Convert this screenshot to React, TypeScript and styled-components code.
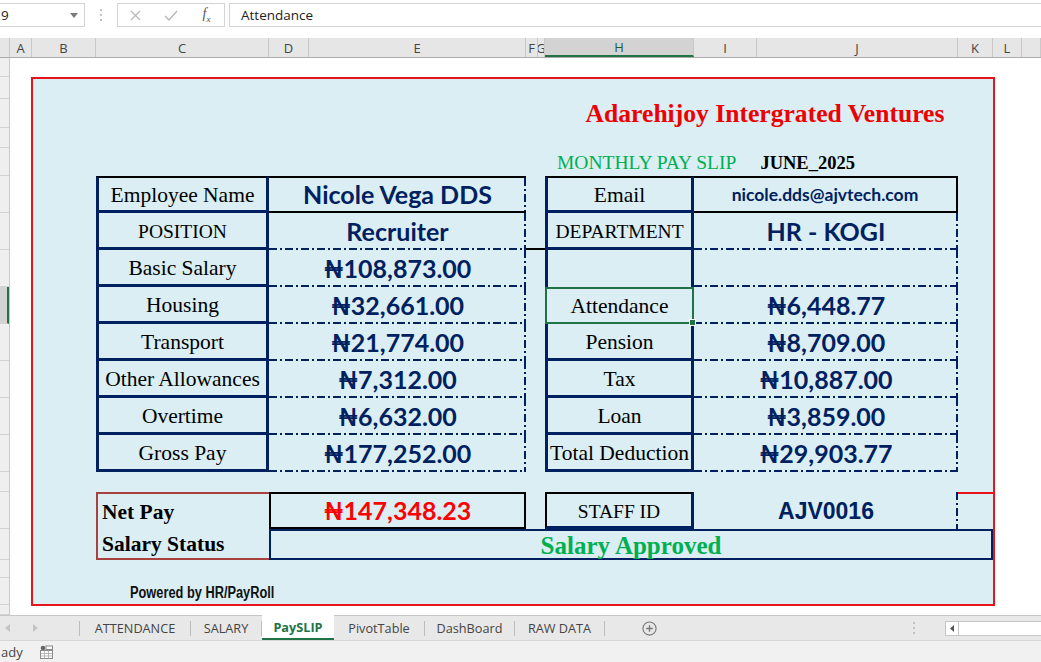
import React from 'react';
import styled, { createGlobalStyle } from 'styled-components';

const NAVY = '#002060';
const EXCEL_GREEN = '#217346';
const UI_FONT = '"Open Sans", "Noto Sans", sans-serif';
const SERIF = '"Liberation Serif", "DejaVu Serif", serif';
const FIGURES = 'Lato, "Noto Sans", "DejaVu Sans", sans-serif';

const GlobalStyle = createGlobalStyle`
  html, body {
    margin: 0;
    padding: 0;
    background: #fff;
  }
  body {
    font-family: ${UI_FONT};
    color: #444;
    overflow: hidden;
  }
`;

const Window = styled.div`
  width: 1041px;
  height: 662px;
  display: flex;
  flex-direction: column;
  overflow: hidden;
`;

/* ---------- formula bar ---------- */

const FormulaBar = styled.div`
  display: flex;
  align-items: flex-start;
  height: 38px;
  box-sizing: border-box;
  padding-top: 3px;
`;

const NameBox = styled.div`
  display: flex;
  align-items: center;
  justify-content: space-between;
  width: 85px;
  height: 24px;
  box-sizing: border-box;
  border: 1px solid #d4d4d4;
  border-left: none;
  padding: 0 6px 0 1px;
  font-size: 13.5px;
  color: #222;
`;

const Grip = styled.div<{ $w?: number }>`
  display: flex;
  flex-direction: column;
  align-items: center;
  justify-content: center;
  gap: 3px;
  width: ${(p) => p.$w ?? 32}px;
  height: 24px;
`;

const GripDot = styled.span`
  width: 2px;
  height: 2px;
  background: #c2c2c2;
`;

const FxBox = styled.div`
  display: grid;
  grid-template-columns: 35px 36px 35px;
  align-items: center;
  justify-items: center;
  height: 24px;
  box-sizing: border-box;
  border: 1px solid #d4d4d4;
`;

const FxGlyph = styled.span`
  font-family: ${SERIF};
  font-style: italic;
  font-size: 14px;
  color: #555;
  sub {
    font-size: 9px;
  }
`;

const FormulaInput = styled.div`
  flex: 1;
  display: flex;
  align-items: center;
  margin-left: 4px;
  height: 24px;
  box-sizing: border-box;
  border: 1px solid #d4d4d4;
  border-right: none;
  padding-left: 11px;
  font-size: 13.5px;
  color: #222;
`;

/* ---------- column headers ---------- */

const ColumnBar = styled.div`
  display: flex;
  height: 20px;
  box-sizing: border-box;
  background: #e6e6e6;
  border-bottom: 1px solid #ababab;
`;

const ColumnHead = styled.div<{ $w?: number; $active?: boolean }>`
  flex: ${(p) => (p.$w ? `0 0 ${p.$w}px` : '1')};
  display: flex;
  align-items: center;
  justify-content: center;
  overflow: hidden;
  box-sizing: border-box;
  border-right: 1px solid #c9c9c9;
  font-size: 13px;
  color: ${(p) => (p.$active ? '#1d5e39' : '#444')};
  background: ${(p) => (p.$active ? '#d3d3d3' : 'transparent')};
  border-bottom: ${(p) => (p.$active ? `2px solid ${EXCEL_GREEN}` : 'none')};
`;

/* ---------- sheet ---------- */

const Sheet = styled.div`
  flex: 1;
  min-height: 0;
  display: flex;
  background: #fff;
`;

const RowHeads = styled.div`
  flex: 0 0 10px;
  display: flex;
  flex-direction: column;
  box-sizing: border-box;
  background: #efefef;
  border-right: 1px solid #c9c9c9;
`;

const RowHead = styled.div<{ $h: number; $active?: boolean }>`
  flex: 0 0 ${(p) => p.$h}px;
  box-sizing: border-box;
  border-bottom: 1px solid #d3d3d3;
  background: ${(p) => (p.$active ? '#d3d3d3' : 'transparent')};
  border-right: ${(p) => (p.$active ? `2px solid ${EXCEL_GREEN}` : 'none')};
`;

const SheetBody = styled.div`
  flex: 1;
`;

const Card = styled.div`
  display: flex;
  flex-direction: column;
  width: 964px;
  height: 529px;
  box-sizing: border-box;
  margin: 19px 0 0 21px;
  padding-left: 63px;
  border: 2px solid #e8141b;
  background: #daeef3;
`;

const TitleRow = styled.div`
  display: flex;
  justify-content: center;
  align-items: flex-start;
  height: 58px;
  width: 448px;
  box-sizing: border-box;
  margin-left: 449px;
  padding: 22px 8px 0 0;
`;

const Title = styled.div`
  font-family: ${SERIF};
  font-weight: 700;
  font-size: 25.6px;
  line-height: 1;
  color: #ee0000;
  white-space: nowrap;
`;

const SubRow = styled.div`
  display: flex;
  align-items: baseline;
  height: 39px;
  box-sizing: border-box;
  padding: 16px 0 0 461px;
  line-height: 1;
  white-space: nowrap;
`;

const SlipName = styled.span`
  font-family: ${SERIF};
  font-size: 19.5px;
  color: #00b050;
`;

const Period = styled.span`
  margin-left: 24px;
  font-family: ${SERIF};
  font-weight: 700;
  font-size: 18.5px;
  color: #000;
`;

const Table = styled.div`
  display: grid;
  grid-template-columns: 173px 257px 19px 149px 264px;
  grid-template-rows: repeat(8, 37px);
`;

const Summary = styled.div`
  display: grid;
  grid-template-columns: 173px 257px 19px 149px 264px 35px;
  grid-template-rows: 37px 31px;
  margin-top: 20px;
`;

type Edge = 'thick' | 'black' | 'navy' | 'dash' | 'brown' | 'red' | 'green';

const line = (e?: Edge) => {
  switch (e) {
    case 'thick':
      return `3px solid ${NAVY}`;
    case 'black':
      return '2px solid #000';
    case 'navy':
      return `2px solid ${NAVY}`;
    case 'brown':
      return '2px solid #a8423d';
    case 'red':
      return '2px solid #e8141b';
    case 'green':
      return `2px solid ${EXCEL_GREEN}`;
    default:
      return 'none';
  }
};

const dashPattern = (dir: string) =>
  `linear-gradient(${dir}, ${NAVY} 0 8px, transparent 8px 11px, ${NAVY} 11px 13px, transparent 13px 16px)`;

// excel's dash-dot borders, drawn as repeating gradients on the right / bottom edge
const dashes = (b?: Edge, r?: Edge) => {
  const img: string[] = [];
  const pos: string[] = [];
  const size: string[] = [];
  const rep: string[] = [];
  if (b === 'dash') {
    img.push(dashPattern('90deg'));
    pos.push('left bottom');
    size.push('16px 2px');
    rep.push('repeat-x');
  }
  if (r === 'dash') {
    img.push(dashPattern('180deg'));
    pos.push('right top');
    size.push('2px 16px');
    rep.push('repeat-y');
  }
  if (!img.length) return '';
  return `
    background-image: ${img.join(', ')};
    background-position: ${pos.join(', ')};
    background-size: ${size.join(', ')};
    background-repeat: ${rep.join(', ')};
  `;
};

interface CellProps {
  $t?: Edge;
  $r?: Edge;
  $b?: Edge;
  $l?: Edge;
  $area?: string;
  $selected?: boolean;
}

const Cell = styled.div<CellProps>`
  position: relative;
  display: flex;
  align-items: center;
  justify-content: center;
  min-width: 0;
  box-sizing: border-box;
  white-space: nowrap;
  grid-area: ${(p) => p.$area ?? 'auto'};
  border-top: ${(p) => line(p.$selected ? 'green' : p.$t)};
  border-right: ${(p) => line(p.$selected ? 'green' : p.$r)};
  border-bottom: ${(p) => line(p.$selected ? 'green' : p.$b)};
  border-left: ${(p) => line(p.$selected ? 'green' : p.$l)};
  z-index: ${(p) => (p.$selected ? 1 : 'auto')};
  ${(p) => dashes(p.$b, p.$r)}

  &::after {
    content: '';
    display: ${(p) => (p.$selected ? 'block' : 'none')};
    position: absolute;
    right: -4px;
    bottom: -4px;
    width: 5px;
    height: 5px;
    background: ${EXCEL_GREEN};
    border: 1px solid #fff;
  }
`;

const NetBox = styled.div`
  grid-area: 1 / 1 / 3 / 2;
  display: grid;
  grid-template-rows: 35px 29px;
  box-sizing: border-box;
  border: 2px solid #a8423d;
  border-right: none;
  padding-left: 4px;
`;

const Caption = styled.span<{ $size?: number; $bold?: boolean }>`
  margin-top: 3px;
  font-family: ${SERIF};
  font-size: ${(p) => p.$size ?? 21.5}px;
  font-weight: ${(p) => (p.$bold ? 700 : 400)};
  line-height: 1;
  color: #000;
  align-self: center;
`;

const Figure = styled.span<{ $size?: number; $color?: string }>`
  font-family: ${FIGURES};
  font-weight: 700;
  font-size: ${(p) => p.$size ?? 25}px;
  line-height: 1;
  color: ${(p) => p.$color ?? NAVY};
`;

const StaffCode = styled.span`
  margin-top: 2px;
  font-family: "Liberation Sans", Arial, sans-serif;
  font-weight: 700;
  font-size: 23px;
  line-height: 1;
  color: ${NAVY};
`;

const Status = styled.span`
  margin-top: 1px;
  font-family: ${SERIF};
  font-weight: 700;
  font-size: 25px;
  line-height: 1;
  color: #00b050;
`;

const Powered = styled.div`
  margin: 25px 0 0 34px;
  font-family: "Liberation Sans", sans-serif;
  font-weight: 700;
  font-size: 16px;
  line-height: 1;
  color: #111;
  white-space: nowrap;
  transform: scaleX(0.8);
  transform-origin: left center;
`;

/* ---------- sheet tabs + status ---------- */

const TabBar = styled.div`
  display: flex;
  align-items: stretch;
  height: 25px;
  box-sizing: border-box;
  border-top: 1px solid #c6c6c6;
  background: #e8e8e8;
`;

const TabNav = styled.div`
  flex: 0 0 79px;
  display: flex;
  align-items: center;
  gap: 23px;
  padding-left: 5px;
  box-sizing: border-box;
`;

const TabSep = styled.span`
  flex: 0 0 1px;
  align-self: center;
  height: 15px;
  background: #bdbdbd;
`;

const Tab = styled.div<{ $w: number; $active?: boolean }>`
  flex: 0 0 ${(p) => p.$w}px;
  display: flex;
  align-items: center;
  justify-content: center;
  box-sizing: border-box;
  font-size: 12.7px;
  color: ${(p) => (p.$active ? EXCEL_GREEN : '#444')};
  font-weight: ${(p) => (p.$active ? 700 : 400)};
  background: ${(p) => (p.$active ? '#fff' : 'transparent')};
  border-bottom: ${(p) => (p.$active ? `2px solid ${EXCEL_GREEN}` : 'none')};
  margin-top: ${(p) => (p.$active ? '-1px' : '0')};
`;

const AddSheet = styled.div`
  display: flex;
  align-items: center;
  margin-left: 37px;
`;

const TabTools = styled.div`
  display: flex;
  align-items: center;
  margin-left: auto;
`;

const ScrollTrack = styled.div`
  display: flex;
  width: 96px;
  height: 15px;
  margin-left: 30px;
  box-sizing: border-box;
  border: 1px solid #c6c6c6;
  border-right: none;
  background: #fff;
`;

const ScrollArrow = styled.div`
  display: flex;
  align-items: center;
  justify-content: center;
  width: 12px;
  border-right: 1px solid #c6c6c6;
`;

const StatusBar = styled.div`
  display: flex;
  align-items: center;
  height: 22px;
  box-sizing: border-box;
  border-top: 1px solid #d6d6d6;
  background: #f1f1f1;
  font-size: 13px;
  color: #444;
`;

const StatusText = styled.span`
  margin-left: 1px;
`;

const StatusIcon = styled.span`
  display: flex;
  margin-left: 16px;
`;

interface SlipRow {
  label: string;
  value: string;
  side: string;
  sideValue: string;
  caps?: boolean;
  sideCaps?: boolean;
  sideSmall?: boolean;
}

const rows: SlipRow[] = [
  { label: 'Employee Name', value: 'Nicole Vega DDS', side: 'Email', sideValue: 'nicole.dds@ajvtech.com', sideSmall: true },
  { label: 'POSITION', value: 'Recruiter', side: 'DEPARTMENT', sideValue: 'HR - KOGI', caps: true, sideCaps: true },
  { label: 'Basic Salary', value: '₦108,873.00', side: '', sideValue: '' },
  { label: 'Housing', value: '₦32,661.00', side: 'Attendance', sideValue: '₦6,448.77' },
  { label: 'Transport', value: '₦21,774.00', side: 'Pension', sideValue: '₦8,709.00' },
  { label: 'Other Allowances', value: '₦7,312.00', side: 'Tax', sideValue: '₦10,887.00' },
  { label: 'Overtime', value: '₦6,632.00', side: 'Loan', sideValue: '₦3,859.00' },
  { label: 'Gross Pay', value: '₦177,252.00', side: 'Total Deduction', sideValue: '₦29,903.77' },
];

const columns: [string, number][] = [
  ['', 10],
  ['A', 22],
  ['B', 64],
  ['C', 173],
  ['D', 40],
  ['E', 217],
  ['F', 12],
  ['G', 7],
  ['H', 149],
  ['I', 63],
  ['J', 201],
  ['K', 35],
  ['L', 29],
];

const rowHeights = [19, 22, 29, 20, 28, 37, 37, 37, 37, 37, 37, 37, 37, 20, 37, 31, 18, 27, 10];
const SELECTED_ROW = 8;
const SELECTED_SIDE = 3;

const tabs = [
  { name: 'ATTENDANCE', w: 110, sep: true },
  { name: 'SALARY', w: 70, sep: true },
  { name: 'PaySLIP', w: 72, active: true },
  { name: 'PivotTable', w: 90, sep: true },
  { name: 'DashBoard', w: 89, sep: true },
  { name: 'RAW DATA', w: 89, sep: true },
];

const App = () => {
  return (
    <Window>
      <GlobalStyle />
      <FormulaBar>
        <NameBox>
          <span>9</span>
          <svg width="8" height="5" viewBox="0 0 8 5">
            <path d="M0 0h8L4 5z" fill="#7a7a7a" />
          </svg>
        </NameBox>
        <Grip>
          <GripDot />
          <GripDot />
          <GripDot />
        </Grip>
        <FxBox>
          <svg width="11" height="11" viewBox="0 0 11 11">
            <path d="M1 1l9 9M10 1L1 10" stroke="#b9b9b9" strokeWidth="1.3" />
          </svg>
          <svg width="14" height="11" viewBox="0 0 14 11">
            <path d="M1 6l4 4 8-9" stroke="#b9b9b9" strokeWidth="1.5" fill="none" />
          </svg>
          <FxGlyph>
            f<sub>x</sub>
          </FxGlyph>
        </FxBox>
        <FormulaInput>Attendance</FormulaInput>
      </FormulaBar>

      <ColumnBar>
        {columns.map(([name, w]) => (
          <ColumnHead key={name || 'corner'} $w={w} $active={name === 'H'}>
            {name}
          </ColumnHead>
        ))}
        <ColumnHead />
      </ColumnBar>

      <Sheet>
        <RowHeads>
          {rowHeights.map((h, i) => (
            <RowHead key={i} $h={h} $active={i === SELECTED_ROW} />
          ))}
        </RowHeads>
        <SheetBody>
          <Card>
            <TitleRow>
              <Title>Adarehijoy Intergrated Ventures</Title>
            </TitleRow>
            <SubRow>
              <SlipName>MONTHLY PAY SLIP</SlipName>
              <Period>JUNE_2025</Period>
            </SubRow>

            <Table>
              {rows.map((row, i) => {
                const first = i === 0;
                return (
                  <React.Fragment key={i}>
                    <Cell $t={first ? 'black' : undefined} $l="thick" $r="thick" $b="thick">
                      <Caption $size={row.caps ? 19.5 : 21.5}>{row.label}</Caption>
                    </Cell>
                    <Cell $t={first ? 'black' : undefined} $r="dash" $b={first ? 'black' : 'dash'}>
                      <Figure>{row.value}</Figure>
                    </Cell>
                    <Cell $b={i === 1 ? 'black' : undefined} />
                    <Cell
                      $t={first ? 'black' : undefined}
                      $l="thick"
                      $r="thick"
                      $b={i === SELECTED_SIDE - 1 ? undefined : 'thick'}
                      $selected={i === SELECTED_SIDE}
                    >
                      <Caption $size={row.sideCaps ? 19.5 : 21.5}>{row.side}</Caption>
                    </Cell>
                    <Cell
                      $t={first ? 'black' : undefined}
                      $r={first ? 'black' : 'dash'}
                      $b={first ? 'black' : 'dash'}
                    >
                      <Figure $size={row.sideSmall ? 17.5 : 25}>{row.sideValue}</Figure>
                    </Cell>
                  </React.Fragment>
                );
              })}
            </Table>

            <Summary>
              <NetBox>
                <Caption $bold>Net Pay</Caption>
                <Caption $bold>Salary Status</Caption>
              </NetBox>
              <Cell $area="1 / 2 / 2 / 3" $t="black" $r="black" $b="black" $l="black">
                <Figure $color="#ff0000">₦147,348.23</Figure>
              </Cell>
              <Cell $area="1 / 4 / 2 / 5" $t="black" $l="black" $r="thick" $b="thick">
                <Caption $size={19.5}>STAFF ID</Caption>
              </Cell>
              <Cell $area="1 / 5 / 2 / 6" $r="dash">
                <StaffCode>AJV0016</StaffCode>
              </Cell>
              <Cell $area="1 / 6 / 2 / 7" $t="red" />
              <Cell $area="2 / 2 / 3 / 7" $t="navy" $r="navy" $b="navy" $l="navy">
                <Status>Salary Approved</Status>
              </Cell>
            </Summary>

            <Powered>Powered by HR/PayRoll</Powered>
          </Card>
        </SheetBody>
      </Sheet>

      <TabBar>
        <TabNav>
          <svg width="5" height="8" viewBox="0 0 5 8">
            <path d="M5 0v8L0 4z" fill="#c4c4c4" />
          </svg>
          <svg width="5" height="8" viewBox="0 0 5 8">
            <path d="M0 0v8l5-4z" fill="#c4c4c4" />
          </svg>
        </TabNav>
        <TabSep />
        {tabs.map((t) => (
          <React.Fragment key={t.name}>
            <Tab $w={t.w} $active={t.active}>
              {t.name}
            </Tab>
            {t.sep && <TabSep />}
          </React.Fragment>
        ))}
        <AddSheet>
          <svg width="15" height="15" viewBox="0 0 16 16">
            <circle cx="8" cy="8" r="7" stroke="#777" strokeWidth="1.2" fill="none" />
            <path d="M8 4.5v7M4.5 8h7" stroke="#777" strokeWidth="1.4" />
          </svg>
        </AddSheet>
        <TabTools>
          <Grip $w={3}>
            <GripDot />
            <GripDot />
            <GripDot />
          </Grip>
          <ScrollTrack>
            <ScrollArrow>
              <svg width="4" height="7" viewBox="0 0 4 7">
                <path d="M4 0v7L0 3.5z" fill="#555" />
              </svg>
            </ScrollArrow>
          </ScrollTrack>
        </TabTools>
      </TabBar>

      <StatusBar>
        <StatusText>ady</StatusText>
        <StatusIcon>
          <svg width="15" height="14" viewBox="0 0 15 14">
            <circle cx="4" cy="3" r="2.3" fill="#666" />
            <rect x="1.5" y="5.5" width="12" height="8" fill="#fff" stroke="#888" />
            <path d="M1.5 8.5h12M1.5 11h12M5.5 5.5v8M9.5 5.5v8" stroke="#aaa" strokeWidth="0.8" />
            <rect x="7" y="1" width="6.5" height="3.5" fill="#fff" stroke="#888" />
          </svg>
        </StatusIcon>
      </StatusBar>
    </Window>
  );
};

export default App;
